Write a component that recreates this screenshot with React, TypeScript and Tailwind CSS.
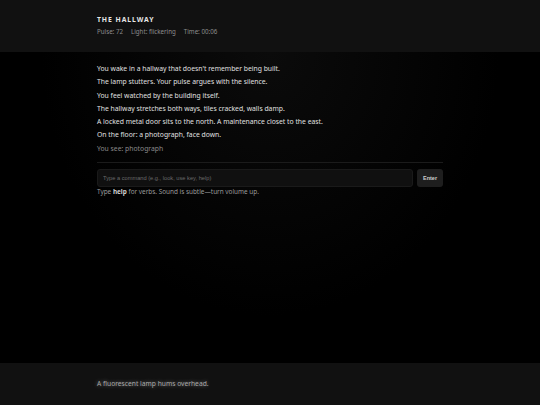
import React from "react";

const lines = [
  "You wake in a hallway that doesn't remember being built.",
  "The lamp stutters. Your pulse argues with the silence.",
  "You feel watched by the building itself.",
  "The hallway stretches both ways, tiles cracked, walls damp.",
  "A locked metal door sits to the north. A maintenance closet to the east.",
  "On the floor: a photograph, face down.",
];

const App = () => {
  return (
    <div
      className="h-screen flex flex-col bg-black text-[#e0e0e0] antialiased"
      style={{ fontFamily: '"Noto Sans", "Open Sans", sans-serif' }}
    >
      <header className="h-[52px] shrink-0 bg-[#111111] px-[97px] flex flex-col justify-center gap-[2px]">
        <h1 className="text-[6.8px] font-bold tracking-[0.14em] text-[#e6e6e6] leading-[10px]">THE HALLWAY</h1>
        <div className="flex gap-[8px] text-[6.2px] leading-[10px] text-[#8d8d8d]">
          <span>Pulse: 72</span>
          <span>Light: flickering</span>
          <span>Time: 00:06</span>
        </div>
      </header>

      <main className="flex-1 px-[97px] pt-[10px] bg-[radial-gradient(ellipse_at_top,_#0b0b0b_0%,_#000000_60%)]">
        <div className="text-[6.8px] leading-[13.3px]">
          {lines.map((line) => (
            <p key={line}>{line}</p>
          ))}
          <p className="text-[#8a8a8a]">You see: photograph</p>
        </div>

        <div className="mt-[7px] border-t border-[#1b1b1b] pt-[6px]">
          <div className="flex gap-[4px]">
            <input
              type="text"
              placeholder="Type a command (e.g., look, use key, help)"
              className="flex-1 h-[17.5px] rounded-[3px] bg-[#101010] border border-[#1a1a1a] px-[5px] text-[5.7px] text-[#ddd] placeholder:text-[#6a6a6a] outline-none"
              style={{ fontFamily: '"Liberation Sans", Arial, sans-serif' }}
            />
            <button
              className="w-[26px] h-[17.5px] rounded-[3px] bg-[#1e1e1e] text-[5.5px] font-bold text-[#cfcfcf]"
              style={{ fontFamily: '"Liberation Sans", Arial, sans-serif' }}
            >
              Enter
            </button>
          </div>
          <p className="text-[6.4px] leading-[10px] text-[#9a9a9a]">
            Type <b className="font-bold text-[#cfcfcf]">help</b> for verbs. Sound is subtle—turn volume up.
          </p>
        </div>
      </main>

      <footer className="h-[42px] shrink-0 bg-[#111111] px-[97px] flex items-center">
        <p className="text-[6.7px] text-[#a8a8a8] [text-shadow:0_0_4px_rgba(255,255,255,0.45)]">
          A fluorescent lamp hums overhead.
        </p>
      </footer>
    </div>
  );
};

export default App;
